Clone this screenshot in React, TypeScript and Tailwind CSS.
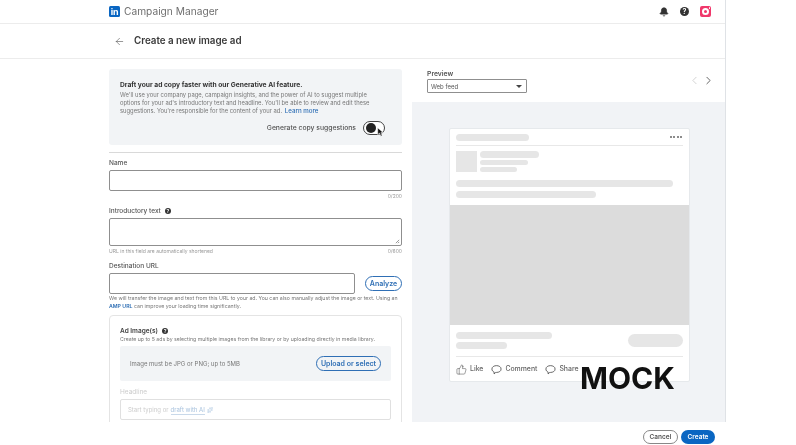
import { Bell, ChevronLeft, ChevronRight, ThumbsUp, ArrowLeft, Sparkles } from "lucide-react";

const font = "font-['Inter','Liberation_Sans',sans-serif]";

function Help() {
    return (
        <span className="inline-flex items-center justify-center w-[6px] h-[6px] rounded-full bg-[#333] text-white text-[5px] font-bold leading-none ml-[4px]">?</span>
    );
}

function Bar({ className }: { className: string }) {
    return <div className={`rounded-full bg-[#e6e6e6] ${className}`} />;
}

function Bubble() {
    return (
        <svg viewBox="0 0 12 12" className="w-[11px] h-[11px] text-[#333]" fill="none" stroke="currentColor" strokeWidth="0.8">
            <path d="M1 5.5C1 3 3.5 1.8 6 1.8s5 1.2 5 3.7-2.5 3.7-5 3.7H5.2L3.4 10.8V8.7C2 8.2 1 7.2 1 5.5z" />
        </svg>
    );
}

function Field({ label, help, counter, hint, tall }: { label: string; help?: boolean; counter: string; hint?: string; tall?: boolean }) {
    return (
        <div>
            <div className="flex items-center h-[10px] pt-[2px] text-[6.5px] font-medium text-[#555] leading-none">
                {label}
                {help && <Help />}
            </div>
            <div className={`relative mt-[3px] border border-[#8f8f8f] rounded-[2px] bg-white ${tall ? "h-[28px]" : "h-[21px]"}`}>
                {tall && (
                    <svg viewBox="0 0 6 6" className="absolute right-[1px] bottom-[1px] w-[5px] h-[5px]">
                        <path d="M5 1 1 5M5 3.5 3.5 5" stroke="#666" strokeWidth="0.8" />
                    </svg>
                )}
            </div>
            <div className="flex justify-between h-[9px] mt-[1px] text-[5px] leading-[9px] text-[#999]">
                <span>{hint}</span>
                <span>{counter}</span>
            </div>
        </div>
    );
}

function AiCard() {
    return (
        <div className="h-[76px] rounded-[3px] bg-[#f2f4f6] pl-[11px] pr-[17px] pt-[11px]">
            <div className="text-[6.7px] font-bold text-[#333] leading-[10px]">Draft your ad copy faster with our Generative AI feature.</div>
            <div className="mt-[1px] text-[5.85px] text-[#777] leading-[8px] whitespace-nowrap">
                <div>We'll use your company page, campaign insights, and the power of AI to suggest multiple</div>
                <div>options for your ad's introductory text and headline. You'll be able to review and edit these</div>
                <div>suggestions. You're responsible for the content of your ad. <span className="ml-[1px] text-[6.2px] text-[#2f6fb5] font-medium">Learn more</span></div>
            </div>
            <div className="flex items-center justify-end gap-[7px] mt-[6px]">
                <span className="text-[6.8px] font-medium text-[#555]">Generate copy suggestions</span>
                <div className="relative w-[22px] h-[14px] rounded-full border-[1.5px] border-[#444] bg-white flex items-center pl-[1.5px]">
                    <div className="w-[10px] h-[10px] rounded-full bg-[#222]" />
                    <svg viewBox="0 0 10 14" className="absolute left-[13px] top-[5px] w-[7px] h-[10px]">
                        <path d="M1 1v10l2.6-2.4L5.4 13l2-.9-1.8-4.2H9z" fill="#111" stroke="#fff" strokeWidth="0.8" />
                    </svg>
                </div>
            </div>
        </div>
    );
}

function LeftColumn() {
    return (
        <div className="w-[293px] ml-[109px] pt-[10px] shrink-0 overflow-hidden">
            <AiCard />
            <div className="h-px bg-[#d9d9d9] mt-[7px]" />
            <div className="mt-[4px]">
                <Field label="Name" counter="0/200" />
            </div>
            <div className="mt-[4px]">
                <Field label="Introductory text" help counter="0/600" hint="URL in this field are automatically shortened" tall />
            </div>
            <div className="mt-[4px] flex items-center h-[10px] pt-[2px] text-[6.5px] font-medium text-[#555] leading-none">Destination URL</div>
            <div className="flex items-center gap-[10px] mt-[3px]">
                <div className="w-[246px] h-[21px] border border-[#8f8f8f] rounded-[2px] bg-white" />
                <div className="w-[37px] h-[15px] rounded-full border border-[#2f6fb5] flex items-center justify-center text-[7px] leading-none font-semibold text-[#2f6fb5]">Analyze</div>
            </div>
            <div className="mt-[1px] text-[5.23px] leading-[7.5px] text-[#777] whitespace-nowrap">
                <div>We will transfer the image and text from this URL to your ad. You can also manually adjust the image or text. Using an</div>
                <div><span className="text-[#2f6fb5] font-semibold">AMP URL</span> can improve your loading time significantly.</div>
            </div>
            <div className="mt-[5px] h-[130px] border border-[#e4e4e4] rounded-[4px] px-[10px] pt-[10px]">
                <div className="flex items-center h-[10px] text-[6.5px] font-semibold text-[#444] leading-none">
                    Ad Image(s)
                    <Help />
                </div>
                <div className="text-[5.2px] leading-[7px] text-[#777] whitespace-nowrap">Create up to 5 ads by selecting multiple images from the library or by uploading directly in media library.</div>
                <div className="mt-[3px] h-[35px] rounded-[2px] bg-[#f2f4f6] flex items-center justify-between pl-[10px] pr-[10px]">
                    <span className="text-[6px] text-[#777]">Image must be JPG or PNG; up to 5MB</span>
                    <div className="w-[65px] h-[15px] rounded-full border border-[#2f6fb5] flex items-center justify-center text-[7px] leading-none font-semibold text-[#2f6fb5]">Upload or select</div>
                </div>
                <div className="mt-[7px] text-[6.5px] leading-[8px] text-[#ccc]">Headline</div>
                <div className="mt-[3px] h-[21px] border border-[#e0e0e0] rounded-[2px] flex items-center pl-[7px] text-[6px] text-[#ccc]">
                    Start typing or <span className="ml-[2px] text-[#a9c3de] border-b border-[#c9d9ea]">draft with AI</span>
                    <Sparkles size={6} className="ml-[2px] text-[#a9c3de]" />
                </div>
            </div>
        </div>
    );
}

function FeedCard() {
    return (
        <div className="w-[241px] h-[254px] bg-white rounded-[2px] border border-[#e6e9ec] flex flex-col shrink-0">
            <div className="mx-[6px] h-[17px] border-b border-[#e8e8e8] flex items-center justify-between">
                <Bar className="w-[73px] h-[7px]" />
                <span className="flex gap-[1.5px] mr-[1px]">
                    <i className="w-[2px] h-[2px] rounded-full bg-[#666]" />
                    <i className="w-[2px] h-[2px] rounded-full bg-[#666]" />
                    <i className="w-[2px] h-[2px] rounded-full bg-[#666]" />
                    <i className="w-[2px] h-[2px] rounded-full bg-[#666]" />
                </span>
            </div>
            <div className="mx-[6px] mt-[5px] flex gap-[3px]">
                <div className="w-[21px] h-[21px] bg-[#e6e6e6]" />
                <div className="flex flex-col gap-[2px]">
                    <Bar className="w-[59px] h-[7px]" />
                    <Bar className="w-[48px] h-[5px]" />
                    <Bar className="w-[37px] h-[5px]" />
                </div>
            </div>
            <Bar className="mx-[6px] mt-[8px] w-[217px] h-[7px] shrink-0" />
            <Bar className="mx-[6px] mt-[4px] w-[140px] h-[7px] shrink-0" />
            <div className="mt-[7px] h-[120px] bg-[#dcdcdc] shrink-0" />
            <div className="mx-[6px] h-[32px] border-b border-[#e8e8e8] flex items-center justify-between shrink-0">
                <div className="flex flex-col gap-[3px]">
                    <Bar className="w-[96px] h-[7px]" />
                    <Bar className="w-[51px] h-[7px]" />
                </div>
                <Bar className="w-[55px] h-[13px]" />
            </div>
            <div className="mx-[6px] flex items-center h-[24px] text-[6.9px] font-medium text-[#666] leading-none">
                <ThumbsUp size={11} strokeWidth={1} className="text-[#333]" />
                <span className="ml-[3px]">Like</span>
                <span className="ml-[8px]"><Bubble /></span>
                <span className="ml-[3px]">Comment</span>
                <span className="ml-[8px]"><Bubble /></span>
                <span className="ml-[3px]">Share</span>
            </div>
        </div>
    );
}

function RightColumn() {
    return (
        <div className="ml-[10px] flex-1 flex flex-col">
            <div className="h-[43px] flex items-start justify-between pl-[15px] pr-[10px] pt-[10px]">
                <div>
                    <div className="text-[6.8px] font-semibold text-[#555] leading-[9px]">Preview</div>
                    <div className="mt-[1px] w-[100px] h-[14px] border border-[#8f8f8f] rounded-[1px] flex items-center justify-between pl-[3px] pr-[4px] text-[6px] text-[#555]">
                        Web feed
                        <span className="w-0 h-0 border-x-[3px] border-x-transparent border-t-[3.5px] border-t-[#444]" />
                    </div>
                </div>
                <div className="flex items-center gap-[1px] mt-[5px]">
                    <ChevronLeft size={13} strokeWidth={1.2} className="text-[#bbb]" />
                    <ChevronRight size={13} strokeWidth={1.5} className="text-[#444]" />
                </div>
            </div>
            <div className="flex-1 bg-[#f1f3f6] pl-[37px] pt-[26px] overflow-hidden">
                <FeedCard />
            </div>
        </div>
    );
}

export default function App() {
    return (
        <div className={`relative w-[796px] h-[445px] overflow-hidden bg-white blur-[0.5px] ${font}`}>
            <div className="w-[726px] h-full flex flex-col">
                <div className="flex-1 min-h-0 border-r border-[#dfe2e6] flex flex-col">
                    <header className="h-[24px] shrink-0 border-b border-[#ececec] flex items-center pl-[109px] pr-[14px]">
                        <span className="w-[11px] h-[11px] rounded-[1.5px] bg-[#0a66c2] text-white text-[9px] font-bold leading-[11px] text-center tracking-tight">in</span>
                        <span className="ml-[4px] text-[10.2px] text-[#6f6f6f] leading-none">Campaign Manager</span>
                        <div className="ml-auto flex items-center gap-[11px]">
                            <Bell size={10} className="text-[#333] fill-[#333]" />
                            <span className="w-[9px] h-[9px] rounded-full bg-[#333] text-white text-[7px] font-bold leading-[9px] text-center">?</span>
                            <span className="relative w-[11px] h-[11px] rounded-[2px] bg-[#f0386b] flex items-center justify-center">
                                <span className="w-[7px] h-[7px] rounded-full border-[2px] border-white" />
                                <span className="absolute right-[1px] top-[1px] w-[1.5px] h-[1.5px] rounded-full bg-white" />
                            </span>
                        </div>
                    </header>
                    <div className="h-[35px] shrink-0 border-b border-[#ececec] flex items-center pl-[114px] pt-[1px]">
                        <ArrowLeft size={11} strokeWidth={1.2} className="text-[#444]" />
                        <span className="ml-[9px] text-[9.8px] font-semibold text-[#3a3a3a]">Create a new image ad</span>
                    </div>
                    <div className="flex-1 min-h-0 flex overflow-hidden">
                        <LeftColumn />
                        <RightColumn />
                    </div>
                </div>
                <footer className="h-[23px] shrink-0 bg-white flex items-end justify-end gap-[3px] pr-[11px] pb-[1px]">
                    <div className="w-[35px] h-[14px] rounded-full border border-[#888] flex items-center justify-center text-[6.5px] leading-none font-semibold text-[#555]">Cancel</div>
                    <div className="w-[34px] h-[14px] rounded-full bg-[#0a66c2] flex items-center justify-center text-[6.5px] leading-none font-semibold text-white">Create</div>
                </footer>
            </div>
            <div className="absolute left-[580px] top-[363px] text-[30px] font-bold leading-none text-[#111]">MOCK</div>
        </div>
    );
}
